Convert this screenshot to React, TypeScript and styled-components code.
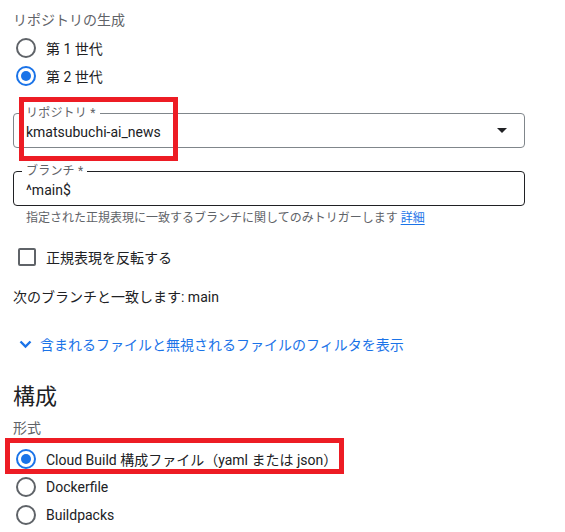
import React from "react";
import styled, { createGlobalStyle } from "styled-components";

const GlobalStyle = createGlobalStyle`
  html, body {
    margin: 0;
    padding: 0;
    background: #ffffff;
  }
  body {
    font-family: Roboto, "Noto Sans CJK JP", "Noto Sans", sans-serif;
    color: #202124;
    -webkit-font-smoothing: antialiased;
  }
  * { box-sizing: border-box; }
`;

const Page = styled.div`
  position: relative;
  width: 565px;
  height: 532px;
  overflow: hidden;
  padding: 10px 40px 0 13px;
  display: flex;
  flex-direction: column;
`;

const SubLabel = styled.div<{ $mt?: number }>`
  font-size: 14px;
  line-height: 20px;
  color: #5f6368;
  margin-top: ${(p) => p.$mt ?? 0}px;
`;

const RadioGroup = styled.div<{ $mt: number }>`
  display: flex;
  flex-direction: column;
  margin-top: ${(p) => p.$mt}px;
`;

const OptionRow = styled.label`
  display: flex;
  align-items: center;
  height: 28px;
  gap: 10px;
  padding-left: 3px;
  font-size: 14px;
  color: #202124;
  white-space: nowrap;
`;

const RadioCircle = styled.span<{ $checked?: boolean }>`
  width: 20px;
  height: 20px;
  border-radius: 50%;
  border: 2px solid ${(p) => (p.$checked ? "#1a73e8" : "#5f6368")};
  display: flex;
  align-items: center;
  justify-content: center;
  flex: none;
  &::after {
    content: "";
    width: 10px;
    height: 10px;
    border-radius: 50%;
    background: ${(p) => (p.$checked ? "#1a73e8" : "transparent")};
  }
`;

const Field = styled.div<{ $mt: number; $dark?: boolean }>`
  position: relative;
  margin-top: ${(p) => p.$mt}px;
  width: 512px;
  height: 35px;
  border: 1px solid ${(p) => (p.$dark ? "#202124" : "#80868b")};
  border-radius: 4px;
  display: flex;
  align-items: center;
  padding: 3px 17px 0 12px;
`;

const FloatLabel = styled.span`
  position: absolute;
  left: 8px;
  top: -9px;
  padding: 0 4px;
  background: #ffffff;
  font-size: 12px;
  line-height: 16px;
  color: #5f6368;
  letter-spacing: 0.2px;
`;

const FieldValue = styled.span`
  flex: 1;
  font-size: 14px;
  line-height: 20px;
  color: #202124;
`;

const Arrow = styled.span`
  width: 0;
  height: 0;
  border-left: 5px solid transparent;
  border-right: 5px solid transparent;
  border-top: 5px solid #202124;
  margin-bottom: 3px;
`;

const Helper = styled.div`
  margin-top: 4px;
  padding-left: 13px;
  font-size: 12px;
  line-height: 16px;
  color: #5f6368;
`;

const HelpLink = styled.a`
  color: #1a73e8;
  text-decoration: underline;
  text-underline-offset: 2px;
  margin-left: 3px;
`;

const CheckRow = styled.label`
  display: flex;
  align-items: center;
  height: 28px;
  gap: 10px;
  padding-left: 5px;
  margin-top: 17px;
  font-size: 14px;
`;

const CheckBox = styled.span`
  width: 18px;
  height: 18px;
  border: 2px solid #5f6368;
  border-radius: 2px;
  flex: none;
`;

const BodyText = styled.div<{ $mt: number }>`
  margin-top: ${(p) => p.$mt}px;
  font-size: 14px;
  line-height: 20px;
  color: #202124;
`;

const ExpandLink = styled.div`
  margin-top: 27px;
  display: flex;
  align-items: center;
  gap: 8px;
  padding-left: 6px;
  height: 20px;
  font-size: 14px;
  color: #1a73e8;
  font-weight: 400;
`;

const Heading = styled.h2`
  margin: 29px 0 0 0;
  font-size: 22px;
  line-height: 28px;
  font-weight: 400;
  color: #202124;
`;

const Highlight = styled.div<{ $x: number; $y: number; $w: number; $h: number }>`
  position: absolute;
  left: ${(p) => p.$x}px;
  top: ${(p) => p.$y}px;
  width: ${(p) => p.$w}px;
  height: ${(p) => p.$h}px;
  border: 5px solid #ed1c24;
  pointer-events: none;
`;

const Chevron = () => (
  <svg width="13" height="9" viewBox="0 0 13 9" fill="none">
    <path d="M1.5 1.5 L6.5 6.5 L11.5 1.5" stroke="#1a73e8" strokeWidth="2.4" />
  </svg>
);

export default function App() {
  return (
    <>
      <GlobalStyle />
      <Page>
        <SubLabel>リポジトリの生成</SubLabel>
        <RadioGroup $mt={4}>
          <OptionRow>
            <RadioCircle />
            第 1 世代
          </OptionRow>
          <OptionRow>
            <RadioCircle $checked />
            第 2 世代
          </OptionRow>
        </RadioGroup>

        <Field $mt={23}>
          <FloatLabel>リポジトリ *</FloatLabel>
          <FieldValue>kmatsubuchi-ai_news</FieldValue>
          <Arrow />
        </Field>

        <Field $mt={23} $dark>
          <FloatLabel>ブランチ *</FloatLabel>
          <FieldValue>^main$</FieldValue>
        </Field>
        <Helper>
          指定された正規表現に一致するブランチに関してのみトリガーします
          <HelpLink>詳細</HelpLink>
        </Helper>

        <CheckRow>
          <CheckBox />
          正規表現を反転する
        </CheckRow>

        <BodyText $mt={16}>次のブランチと一致します: main</BodyText>

        <ExpandLink>
          <Chevron />
          含まれるファイルと無視されるファイルのフィルタを表示
        </ExpandLink>

        <Heading>構成</Heading>
        <SubLabel $mt={7}>形式</SubLabel>
        <RadioGroup $mt={7}>
          <OptionRow>
            <RadioCircle $checked />
            Cloud Build 構成ファイル（yaml または json）
          </OptionRow>
          <OptionRow>
            <RadioCircle />
            Dockerfile
          </OptionRow>
          <OptionRow>
            <RadioCircle />
            Buildpacks
          </OptionRow>
        </RadioGroup>

        <Highlight $x={19} $y={97} $w={159} $h={64} />
        <Highlight $x={5} $y={438} $w={339} $h={36} />
      </Page>
    </>
  );
}
